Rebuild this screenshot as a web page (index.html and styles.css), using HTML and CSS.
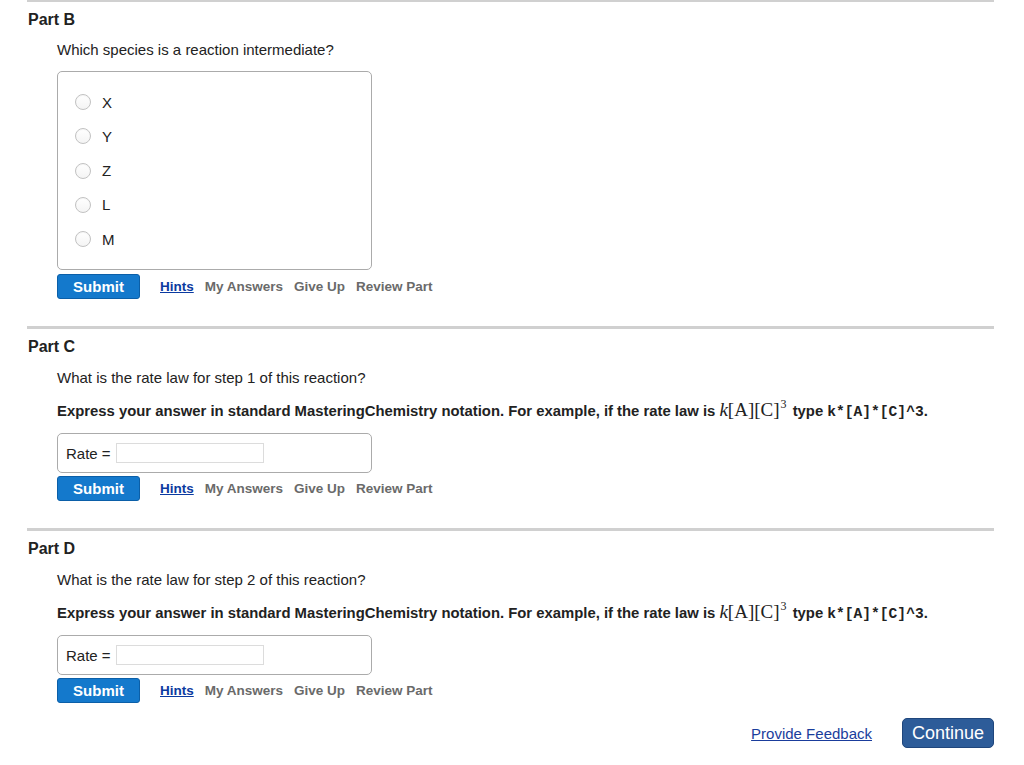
FILE: index.html
```html
<!DOCTYPE html>
<html>
<head>
<meta charset="utf-8">
<link rel="stylesheet" href="styles.css">
</head>
<body>
<div class="page">
  <section class="part part-b">
    <h2 class="part-title">Part B</h2>
    <div class="part-body">
      <p class="question">Which species is a reaction intermediate?</p>
      <div class="choices">
        <label class="choice"><span class="radio"></span><span class="choice-label">X</span></label>
        <label class="choice"><span class="radio"></span><span class="choice-label">Y</span></label>
        <label class="choice"><span class="radio"></span><span class="choice-label">Z</span></label>
        <label class="choice"><span class="radio"></span><span class="choice-label">L</span></label>
        <label class="choice"><span class="radio"></span><span class="choice-label">M</span></label>
      </div>
      <div class="actions">
        <button class="submit">Submit</button>
        <a class="hint-link">Hints</a>
        <span class="action-link">My Answers</span>
        <span class="action-link">Give Up</span>
        <span class="action-link">Review Part</span>
      </div>
    </div>
  </section>

  <section class="part">
    <h2 class="part-title">Part C</h2>
    <div class="part-body">
      <p class="question">What is the rate law for step 1 of this reaction?</p>
      <p class="instructions">Express your answer in standard MasteringChemistry notation. For example, if the rate law is <span class="math"><i>k</i>[A][C]<sup>3</sup></span> type <code>k*[A]*[C]^3</code>.</p>
      <div class="answer-box">
        <span class="answer-label">Rate =</span><span class="answer-input"></span>
      </div>
      <div class="actions">
        <button class="submit">Submit</button>
        <a class="hint-link">Hints</a>
        <span class="action-link">My Answers</span>
        <span class="action-link">Give Up</span>
        <span class="action-link">Review Part</span>
      </div>
    </div>
  </section>

  <section class="part">
    <h2 class="part-title">Part D</h2>
    <div class="part-body">
      <p class="question">What is the rate law for step 2 of this reaction?</p>
      <p class="instructions">Express your answer in standard MasteringChemistry notation. For example, if the rate law is <span class="math"><i>k</i>[A][C]<sup>3</sup></span> type <code>k*[A]*[C]^3</code>.</p>
      <div class="answer-box">
        <span class="answer-label">Rate =</span><span class="answer-input"></span>
      </div>
      <div class="actions">
        <button class="submit">Submit</button>
        <a class="hint-link">Hints</a>
        <span class="action-link">My Answers</span>
        <span class="action-link">Give Up</span>
        <span class="action-link">Review Part</span>
      </div>
    </div>
  </section>

  <div class="footer">
    <a class="feedback">Provide Feedback</a>
    <button class="continue">Continue</button>
  </div>
</div>
</body>
</html>
```

FILE: styles.css
```css
* { box-sizing: border-box; }

body {
  margin: 0;
  background: #fff;
  font-family: "Liberation Sans", Arial, sans-serif;
  color: #222;
}

.page {
  margin: 0 30px 0 27px;
  width: 967px;
}

.part {
  border-top: 3px solid #d0d0d0;
  padding-bottom: 27px;
}

.part-b {
  border-top-width: 2px;
}

.part-title {
  margin: 8px 0 0 1px;
  font-size: 16px;
  line-height: 20px;
  font-weight: bold;
  color: #222;
}

.part-body {
  padding-left: 30px;
}

.question {
  margin: 11px 0 0;
  font-size: 15px;
  line-height: 20px;
  color: #222;
}

.part-b .question {
  margin-top: 10px;
}

.instructions {
  margin: 13px 0 0;
  height: 20px;
  font-size: 14.85px;
  line-height: 20px;
  font-weight: bold;
  color: #222;
  white-space: nowrap;
}

.math {
  font-family: "Liberation Serif", "Times New Roman", serif;
  font-weight: normal;
  font-size: 19px;
  line-height: 0;
  margin: 0 2px 0 0;
}

.math sup {
  font-size: 12px;
  line-height: 0;
  vertical-align: 8px;
  margin-left: 1px;
}

code {
  font-family: "Liberation Mono", "Courier New", monospace;
  font-weight: bold;
  font-size: 14.6px;
  color: #222;
}

.choices {
  margin-top: 11px;
  width: 315px;
  border: 1px solid #ababab;
  border-radius: 5px;
  padding: 13px 0 13px 17px;
  display: flex;
  flex-direction: column;
}

.choice {
  flex: none;
  height: 34.25px;
  display: flex;
  align-items: center;
  font-size: 15px;
  color: #222;
}

.radio {
  width: 16px;
  height: 16px;
  border-radius: 50%;
  border: 1px solid #c2c2c2;
  background: linear-gradient(#ffffff, #f4f4f4);
  box-shadow: inset 0 1px 1px rgba(0,0,0,0.04);
  margin-right: 11px;
  flex: none;
}

.answer-box {
  margin-top: 12px;
  width: 315px;
  height: 40px;
  border: 1px solid #ababab;
  border-radius: 5px;
  padding-left: 8px;
  display: flex;
  align-items: center;
  font-size: 15px;
  color: #222;
}

.answer-input {
  display: inline-block;
  width: 148px;
  height: 20px;
  margin-left: 5px;
  border: 1px solid #dcdcdc;
  background: #fff;
}

.actions {
  margin-top: 3px;
  display: flex;
  align-items: center;
  height: 25px;
}

.part-b .actions {
  margin-top: 4px;
}

.submit {
  width: 83px;
  height: 25px;
  border: 1px solid #0b5fa8;
  border-radius: 3px;
  background: #1479cc;
  color: #fff;
  font-family: "Liberation Sans", Arial, sans-serif;
  font-weight: bold;
  font-size: 15px;
  padding: 0;
  margin-right: 20px;
}

.hint-link {
  color: #0b3aa0;
  text-decoration: underline;
  font-weight: bold;
  font-size: 13.5px;
  margin-right: 11px;
}

.action-link {
  color: #6a6a6a;
  font-weight: bold;
  font-size: 13.5px;
  margin-right: 11px;
}

.footer {
  margin-top: -12px;
  display: flex;
  justify-content: flex-end;
  align-items: center;
}

.feedback {
  color: #1a3d9c;
  text-decoration: underline;
  font-size: 15px;
  margin-right: 30px;
}

.continue {
  width: 92px;
  height: 30px;
  border: 1px solid #1f467c;
  border-radius: 5px;
  background: #2d5c99;
  color: #fff;
  font-family: "Liberation Sans", Arial, sans-serif;
  font-size: 18px;
  padding: 0;
}
```
